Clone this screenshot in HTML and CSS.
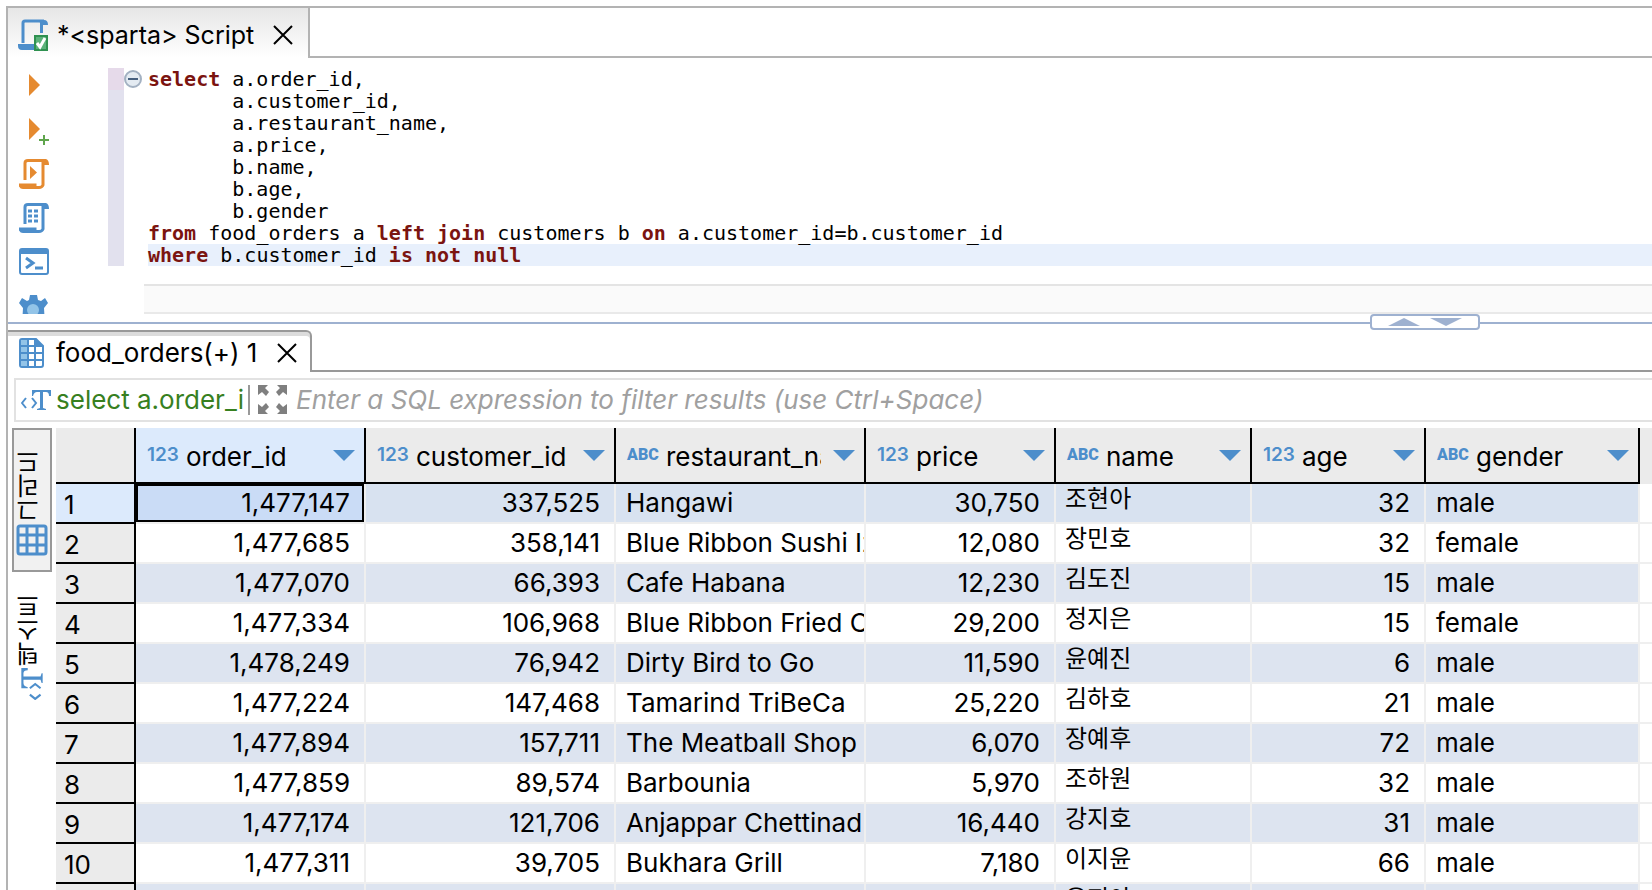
FILE: index.html
```html
<!DOCTYPE html>
<html lang="ko">
<head>
  <meta charset="UTF-8" />
  <title>sparta Script</title>
  <meta name="viewport" content="width=device-width, initial-scale=1.0"/>
  <link rel="stylesheet" href="styles.css">
</head>
<body>

<main class="window">

  <!-- script editor -->
  <section class="editor">
    <div class="tab-bar">
      <div class="tab script-tab">
        <svg class="tab-icon" width="32" height="32" viewBox="0 0 32 32">
          <path d="M6 24V4q0-2 2-2H27" fill="none" stroke="#4d8ecb" stroke-width="3"/>
          <path d="M22 1H27Q31 1 31 6H26V14H23V4ZM1 25H18V31H5Q1 31 1 27Z" fill="#4d8ecb"/>
          <path d="M17 16H31V32H17Z" fill="#2f9150"/>
          <path d="M19 18H29V30H19Z" fill="#5cb27a"/>
          <path d="M20 24L23 28L28 19" fill="none" stroke="#fff" stroke-width="3"/>
        </svg>
        <span>*&lt;sparta&gt; Script</span>
        <button class="close" aria-label="Close">
          <svg width="20" height="20" viewBox="0 0 20 20"><path d="M1 1L19 19M19 1L1 19"/></svg>
        </button>
      </div>
    </div>

    <div class="editor-body">
      <div class="toolbar">
        <button aria-label="Execute">
          <svg width="30" height="30"><path d="M10 3V25L21 14Z" fill="#e58a30"/></svg>
        </button>
        <button aria-label="Execute in new tab">
          <svg width="30" height="30"><path d="M10 3V25L21 14Z" fill="#e58a30"/><path d="M20 25H30M25 20V30" stroke="#5fa54c" stroke-width="2"/></svg>
        </button>
        <button aria-label="Execute script">
          <svg width="30" height="30" viewBox="0 0 30 30" fill="none" stroke="#e58a30" stroke-width="3">
            <path d="M6 21V4Q6 1.500 9 1.500H24V26Q23 28.500 20 28.500H4Q2 28.500 1 26H16V28"/>
            <path d="M23 0H27Q30 1 30 6H23Z" fill="#e58a30" stroke="none"/>
            <path d="M11 7V20L18 13.500Z" fill="#e58a30" stroke="none"/>
          </svg>
        </button>
        <button aria-label="Explain plan">
          <svg width="30" height="30" viewBox="0 0 30 30" fill="none" stroke="#4d8ecb" stroke-width="3">
            <path d="M6 21V4Q6 1.500 9 1.500H24V26Q23 28.500 20 28.500H4Q2 28.500 1 26H16V28"/>
            <path d="M23 0H27Q30 1 30 6H23Z" fill="#4d8ecb" stroke="none"/>
            <path d="M9 8H13M15 8H19M9 13H13M15 13H19M9 18H13M15 18H19"/>
          </svg>
        </button>
        <button aria-label="Terminal">
          <svg width="30" height="30" viewBox="0 0 30 30">
            <rect x="1" y="2" width="28" height="25" rx="2" fill="#fff" stroke="#4d8ecb" stroke-width="2"/>
            <path d="M1 2H29V7H1Z" fill="#4d8ecb"/>
            <path d="M7 11L14 16L7 21M16 21H24" fill="none" stroke="#4d8ecb" stroke-width="3"/>
          </svg>
        </button>
        <button aria-label="Settings">
          <svg width="30" height="34" viewBox="0 0 30 34">
            <path d="M11 4H18L19 9L22 10L26 7L29 12L25 17L26 34H3L4 17L0 12L3 7L8 10L10 9Z" fill="#4d8ecb"/>
            <circle cx="14" cy="19" r="6" fill="#93c4e8"/>
          </svg>
        </button>
      </div>

      <div class="ruler"></div>

      <div class="code">
        <button class="fold" aria-label="Collapse">
          <svg width="18" height="18"><circle cx="9" cy="9" r="8" fill="#e4ebf2" stroke="#a3b1c2" stroke-width="2"/><path d="M4 9H14" stroke="#47607f" stroke-width="2"/></svg>
        </button>
        <pre><b>select</b> a.order_id,
       a.customer_id,
       a.restaurant_name,
       a.price,
       b.name,
       b.age,
       b.gender
<b>from</b> food_orders a <b>left</b> <b>join</b> customers b <b>on</b> a.customer_id=b.customer_id
<span class="current"><b>where</b> b.customer_id <b>is</b> <b>not</b> <b>null</b></span></pre>
        <div class="scroll-track"></div>
      </div>
    </div>
  </section>

  <div class="sash">
    <div class="sash-buttons">
      <button aria-label="Maximize results"><svg width="32" height="8"><path d="M0 8L16 0L32 8Z"/></svg></button>
      <button aria-label="Minimize results"><svg width="32" height="8"><path d="M0 0H32L16 8Z"/></svg></button>
    </div>
  </div>

  <!-- result set -->
  <section class="results">
    <div class="tab-bar">
      <div class="tab result-tab">
        <svg class="tab-icon" width="26" height="30" viewBox="0 0 26 30">
          <path d="M3 1H17L24 8V27Q24 29 22 29H3Q1 29 1 27V3Q1 1 3 1Z" fill="#fff" stroke="#4d8ecb" stroke-width="2"/>
          <path d="M2 2H9V28H2Z" fill="#93c4e8"/>
          <path d="M17 1L24 8H17Z" fill="#4d8ecb"/>
          <path d="M9 1V29M16 1V29M1 8H24M1 15H24M1 22H24" stroke="#4d8ecb" stroke-width="2"/>
        </svg>
        <span>food_orders(+) 1</span>
        <button class="close" aria-label="Close">
          <svg width="20" height="20" viewBox="0 0 20 20"><path d="M1 1L19 19M19 1L1 19"/></svg>
        </button>
      </div>
    </div>

    <div class="filter">
      <svg class="text-icon" width="30" height="20" viewBox="0 0 30 20">
        <path d="M5 8L1 13L5 18M11 8L15 13L11 18" fill="none" stroke="#4d8ecb" stroke-width="2"/>
        <path d="M11 0H30V6H28Q28 2 25 2H22V18L25 19V20H16V19L19 18V2H16Q13 2 12 6H11Z" fill="#4d8ecb"/>
      </svg>
      <span class="query">select a.order_id</span>
      <button class="expand" aria-label="Expand">
        <svg width="30" height="30" viewBox="0 0 30 30" fill="#7f7f7f">
          <path d="M0 0H10L7 3L11 7L8 11L4 7L0 10Z"/>
          <path d="M29 0H19L22 3L18 7L21 11L25 7L29 10ZM0 29H10L7 26L11 22L8 18L4 22L0 19ZM29 29H19L22 26L18 22L21 18L25 22L29 19Z"/>
        </svg>
      </button>
      <input type="text" aria-label="Filter" placeholder="Enter a SQL expression to filter results (use Ctrl+Space)">
    </div>

    <div class="result-body">
      <div class="side-tabs">
        <button class="active">
          <span>그리드</span>
          <svg width="32" height="32" viewBox="0 0 32 32">
            <rect x="2" y="2" width="28" height="28" rx="2" fill="#f1f1f1" stroke="#4d8ecb" stroke-width="3"/>
            <path d="M11 2V30M21 2V30M2 11H30M2 21H30" stroke="#4d8ecb" stroke-width="3"/>
          </svg>
        </button>
        <button>
          <span>텍스트</span>
          <svg width="22" height="32" viewBox="0 0 20 30">
            <g transform="translate(0 30) rotate(-90)">
              <path d="M5 8L1 13L5 18M11 8L15 13L11 18" fill="none" stroke="#4d8ecb" stroke-width="2"/>
              <path d="M11 0H30V6H28Q28 2 25 2H22V18L25 19V20H16V19L19 18V2H16Q13 2 12 6H11Z" fill="#4d8ecb"/>
            </g>
          </svg>
        </button>
      </div>

      <table>
        <colgroup>
          <col class="w-index"><col class="w-order"><col class="w-text"><col class="w-text">
          <col class="w-price"><col class="w-name"><col class="w-age"><col class="w-gender"><col>
        </colgroup>
        <thead>
          <tr>
            <th></th>
            <th class="selected"><div class="head"><i class="num">123</i><span>order_id</span><button aria-label="Sort"></button></div></th>
            <th><div class="head"><i class="num">123</i><span>customer_id</span><button aria-label="Sort"></button></div></th>
            <th><div class="head"><i class="abc">ABC</i><span>restaurant_name</span><button aria-label="Sort"></button></div></th>
            <th><div class="head"><i class="num">123</i><span>price</span><button aria-label="Sort"></button></div></th>
            <th><div class="head"><i class="abc">ABC</i><span>name</span><button aria-label="Sort"></button></div></th>
            <th><div class="head"><i class="num">123</i><span>age</span><button aria-label="Sort"></button></div></th>
            <th><div class="head"><i class="abc">ABC</i><span>gender</span><button aria-label="Sort"></button></div></th>
            <th class="rest"></th>
          </tr>
        </thead>
        <tbody>
          <tr class="selected"><th>1</th><td class="n focus">1,477,147</td><td class="n">337,525</td><td>Hangawi</td><td class="n">30,750</td><td class="ko">조현아</td><td class="n">32</td><td>male</td><td></td></tr>
          <tr><th>2</th><td class="n">1,477,685</td><td class="n">358,141</td><td>Blue Ribbon Sushi Izakaya</td><td class="n">12,080</td><td class="ko">장민호</td><td class="n">32</td><td>female</td><td></td></tr>
          <tr><th>3</th><td class="n">1,477,070</td><td class="n">66,393</td><td>Cafe Habana</td><td class="n">12,230</td><td class="ko">김도진</td><td class="n">15</td><td>male</td><td></td></tr>
          <tr><th>4</th><td class="n">1,477,334</td><td class="n">106,968</td><td>Blue Ribbon Fried Chicken</td><td class="n">29,200</td><td class="ko">정지은</td><td class="n">15</td><td>female</td><td></td></tr>
          <tr><th>5</th><td class="n">1,478,249</td><td class="n">76,942</td><td>Dirty Bird to Go</td><td class="n">11,590</td><td class="ko">윤예진</td><td class="n">6</td><td>male</td><td></td></tr>
          <tr><th>6</th><td class="n">1,477,224</td><td class="n">147,468</td><td>Tamarind TriBeCa</td><td class="n">25,220</td><td class="ko">김하호</td><td class="n">21</td><td>male</td><td></td></tr>
          <tr><th>7</th><td class="n">1,477,894</td><td class="n">157,711</td><td>The Meatball Shop</td><td class="n">6,070</td><td class="ko">장예후</td><td class="n">72</td><td>male</td><td></td></tr>
          <tr><th>8</th><td class="n">1,477,859</td><td class="n">89,574</td><td>Barbounia</td><td class="n">5,970</td><td class="ko">조하원</td><td class="n">32</td><td>male</td><td></td></tr>
          <tr><th>9</th><td class="n">1,477,174</td><td class="n">121,706</td><td>Anjappar Chettinad</td><td class="n">16,440</td><td class="ko">강지호</td><td class="n">31</td><td>male</td><td></td></tr>
          <tr><th>10</th><td class="n">1,477,311</td><td class="n">39,705</td><td>Bukhara Grill</td><td class="n">7,180</td><td class="ko">이지윤</td><td class="n">66</td><td>male</td><td></td></tr>
          <tr><th></th><td></td><td></td><td></td><td></td><td class="ko">윤지아</td><td></td><td></td><td></td></tr>
        </tbody>
      </table>
    </div>
  </section>

</main>

</body>
</html>
```
FILE: styles.css
```css
:root {
  --blue: #4d8ecb;
  --sash: #9eb1d0;
  --border: #b3b3b3;
  --head: #ebebeb;
  --head-selected: #dceafc;
}

* {
  box-sizing: border-box;
  margin: 0;
  padding: 0;
}

body {
  height: 100vh;
  overflow: hidden;
  padding: 6px 0 0 6px;
  background: white;
  color: black;
  font-family: Inter, "Noto Sans CJK KR", sans-serif;
  font-size: 26px;
  line-height: 32px;
}

button {
  display: block;
  border: none;
  background: none;
  font: inherit;
  color: inherit;
}

svg {
  display: block;
}

.window {
  height: 100%;
  border-top: 2px solid var(--border);
  border-left: 2px solid var(--border);
}

/* tabs */
.tab-bar {
  display: flex;
}

.tab-bar::after {
  content: "";
  flex: 1;
  border-bottom: 2px solid var(--border);
}

.tab {
  display: flex;
  align-items: center;
  white-space: nowrap;
}

.tab span {
  flex: 1;
}

.script-tab {
  width: 302px;
  height: 50px;
  padding: 4px 15px 0 9px;
  gap: 8px;
  border-right: 2px solid var(--border);
  background: linear-gradient(#e6e6e6, white);
  font-size: 25px;
}

.result-tab {
  width: 304px;
  height: 42px;
  padding: 2px 13px 0 11px;
  gap: 11px;
  border-top: 2px solid #999;
  border-right: 2px solid #999;
  border-top-right-radius: 6px;
  box-shadow: inset 0 4px #dcdcdc;
}

.results .tab-bar::after {
  border-color: #999;
}

.close path {
  stroke: black;
  stroke-width: 2;
}

/* editor */
.editor-body {
  display: flex;
  height: 256px;
}

.toolbar {
  width: 100px;
  padding: 13px 0 0 11px;
  overflow: hidden;
}

.toolbar button {
  height: 30px;
  margin-bottom: 14px;
}

.ruler {
  width: 16px;
  height: 198px;
  margin-top: 10px;
  background: linear-gradient(#e6daea 22px, #e2e1ee 22px);
}

.code {
  flex: 1;
  display: flex;
  flex-direction: column;
  position: relative;
  padding-top: 10px;
}

.fold {
  position: absolute;
  top: 12px;
  left: 0;
}

pre {
  margin-left: 24px;
  font: 20px/22px "DejaVu Sans Mono", monospace;
}

pre b {
  color: #7b1410;
}

.current {
  display: block;
  background: #e8f0fc;
}

.scroll-track {
  height: 30px;
  margin: auto 0 0 20px;
  border-top: 2px solid #e4e4e4;
  border-bottom: 2px solid #e9e9e9;
  background: #fafafa;
}

/* sash between editor and results */
.sash {
  position: relative;
  height: 16px;
  padding-top: 8px;
}

.sash::before {
  content: "";
  display: block;
  border-top: 2px solid var(--sash);
}

.sash-buttons {
  position: absolute;
  top: 0;
  right: 172px;
  width: 110px;
  height: 16px;
  display: flex;
  align-items: center;
  justify-content: center;
  gap: 10px;
  border: 2px solid var(--sash);
  border-radius: 4px;
  background: white;
}

.sash path {
  fill: var(--sash);
}

/* filter */
.filter {
  display: flex;
  align-items: center;
  height: 44px;
  margin: 6px 0 0 6px;
  padding-left: 5px;
  border: 2px solid #e2e2e2;
  border-right: none;
}

.query {
  width: 188px;
  margin-left: 5px;
  overflow: hidden;
  white-space: nowrap;
  color: #37801f;
}

.expand {
  margin-left: 4px;
  padding-left: 8px;
  border-left: 2px solid #999;
}

.filter input {
  flex: 1;
  margin-left: 8px;
  border: none;
  outline: none;
  font: inherit;
  font-style: italic;
}

.filter input::placeholder {
  color: #a0a0a0;
}

/* grid / text switch */
.result-body {
  display: flex;
  margin: 6px 0 0 4px;
}

.side-tabs {
  width: 44px;
}

.side-tabs button {
  display: flex;
  flex-direction: column;
  align-items: center;
  justify-content: flex-end;
  gap: 2px;
  width: 40px;
  height: 144px;
  padding-bottom: 14px;
  border: 2px solid transparent;
  font-size: 24px;
}

.side-tabs .active {
  border-color: #999;
  background: #f1f1f1;
}

.side-tabs span {
  margin-right: 4px;
  writing-mode: vertical-rl;
  transform: rotate(180deg);
}

/* data grid */
table {
  flex: 1;
  width: 0;
  table-layout: fixed;
  border-collapse: separate;
  border-spacing: 0;
}

.w-index  { width: 80px; }
.w-order  { width: 230px; }
.w-text   { width: 250px; }
.w-price  { width: 190px; }
.w-name   { width: 196px; }
.w-age    { width: 174px; }
.w-gender { width: 214px; }

th {
  background: var(--head);
  border-right: 2px solid black;
  border-bottom: 2px solid black;
  font-weight: normal;
  text-align: left;
}

thead th {
  height: 56px;
}

th.rest {
  border: none;
}

th.selected,
tr.selected th {
  background: var(--head-selected);
}

.head {
  display: flex;
  align-items: center;
  padding: 4px 9px 0 11px;
}

.head i {
  width: 32px;
  margin-right: 7px;
  padding-bottom: 5px;
  color: var(--blue);
  font-style: normal;
  line-height: 24px;
}

.num {
  font-size: 19px;
  font-weight: 600;
}

.abc {
  font-family: Roboto, sans-serif;
  font-size: 16px;
  font-weight: 900;
}

.head span {
  flex: 1;
  overflow: hidden;
  white-space: nowrap;
}

.head button {
  margin: 0 0 4px 12px;
  border: 11px solid transparent;
  border-top-color: var(--blue);
  border-bottom: none;
}

tbody th {
  padding: 4px 0 0 8px;
}

td {
  height: 40px;
  padding: 0 0 0 10px;
  border-right: 2px solid #efefef;
  border-bottom: 2px solid #efefef;
  overflow: hidden;
  white-space: nowrap;
}

td:last-child {
  border-right: none;
}

tbody tr:nth-child(odd) td:not(:last-child) {
  background: #dde4f0;
}

tbody tr.selected td:not(:last-child) {
  background: #d8e2f0;
}

.n {
  padding: 0 14px 0 0;
  text-align: right;
}

.ko {
  padding: 0 0 8px 9px;
  font-size: 24px;
  line-height: 30px;
}

tbody tr.selected td.focus {
  background: #cadcf6;
  box-shadow: inset 0 0 0 2px black;
}
```
